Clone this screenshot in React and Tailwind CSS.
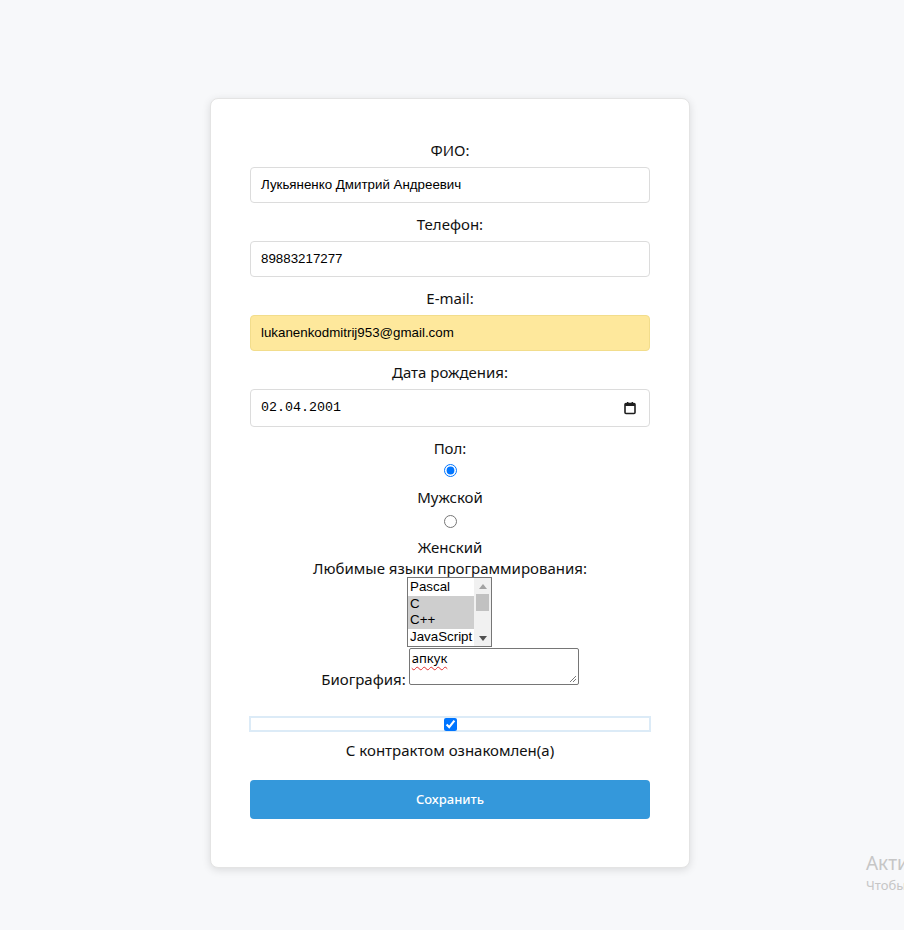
import { useState } from 'react'

const LANGS = [
  { name: 'Pascal', selected: false },
  { name: 'C', selected: true },
  { name: 'C++', selected: true },
  { name: 'JavaScript', selected: false },
]

function FieldLabel({ children, className = '' }) {
  return <div className={`text-center text-[15px] leading-[22px] text-[#111] ${className}`}>{children}</div>
}

function TextBox({ value, yellow }) {
  return (
    <div
      className={`flex h-[36px] items-center rounded-[4px] border px-[10px] font-['Liberation_Sans',Arial,sans-serif] text-[13.33px] text-black ${
        yellow ? 'border-[#f2dd8c] bg-[#fee89c]' : 'border-[#dcdcdc] bg-white'
      }`}
    >
      {value}
    </div>
  )
}

function CalendarIcon() {
  return (
    <svg width="14" height="14" viewBox="0 0 14 14" fill="none">
      <rect x="2" y="2.5" width="10" height="10" rx="1" stroke="#1f1f1f" strokeWidth="1.6" />
      <rect x="2" y="2.5" width="10" height="2.5" fill="#1f1f1f" />
      <rect x="4" y="1" width="1.4" height="2.5" fill="#1f1f1f" />
      <rect x="8.6" y="1" width="1.4" height="2.5" fill="#1f1f1f" />
    </svg>
  )
}

function LangList() {
  return (
    <div className="flex h-[70px] w-[85px] border border-[#767676] bg-white font-['Liberation_Sans',Arial,sans-serif] text-[13.33px] leading-[16.5px] text-black">
      <div className="flex-1 overflow-hidden pt-[1px]">
        {LANGS.map((l) => (
          <div key={l.name} className={`h-[16.5px] pl-[2px] whitespace-nowrap ${l.selected ? 'bg-[#cecece]' : ''}`}>
            {l.name}
          </div>
        ))}
      </div>
      <div className="flex w-[17px] flex-col items-center bg-[#f1f1f1]">
        <div className="flex h-[16px] items-center justify-center">
          <svg width="8" height="5" viewBox="0 0 8 5"><path d="M0 5 L4 0 L8 5 Z" fill="#a3a3a3" /></svg>
        </div>
        <div className="h-[17px] w-[13px] bg-[#c1c1c1]" />
        <div className="flex-1" />
        <div className="flex h-[16px] items-center justify-center">
          <svg width="8" height="5" viewBox="0 0 8 5"><path d="M0 0 L4 5 L8 0 Z" fill="#505050" /></svg>
        </div>
      </div>
    </div>
  )
}

export default function App() {
  const [gender, setGender] = useState('m')
  const [agree, setAgree] = useState(true)

  return (
    <div className="relative min-h-[930px] overflow-hidden bg-[#f7f8fa] pt-[98px] font-['Noto_Sans','Open_Sans',sans-serif]">
      <div className="ml-[210px] w-[480px] rounded-[8px] border border-[#e4e4e4] bg-white px-[39px] pt-[40px] pb-[48px] shadow-[0_2px_8px_rgba(0,0,0,0.12)]">
        <FieldLabel>ФИО:</FieldLabel>
        <div className="mt-[6px]">
          <TextBox value="Лукьяненко Дмитрий Андреевич" />
        </div>

        <FieldLabel className="mt-[10px]">Телефон:</FieldLabel>
        <div className="mt-[6px]">
          <TextBox value="89883217277" />
        </div>

        <FieldLabel className="mt-[10px]">E-mail:</FieldLabel>
        <div className="mt-[6px]">
          <TextBox value="lukanenkodmitrij953@gmail.com" yellow />
        </div>

        <FieldLabel className="mt-[10px]">Дата рождения:</FieldLabel>
        <div className="mt-[6px] flex h-[38px] items-center justify-between rounded-[4px] border border-[#dcdcdc] bg-white pr-[12px] pl-[10px] font-['Liberation_Mono','DejaVu_Sans_Mono',monospace] text-[13.33px] text-black">
          <span>02.04.2001</span>
          <CalendarIcon />
        </div>

        <FieldLabel className="mt-[10px]">Пол:</FieldLabel>
        <div className="mt-[5px] flex h-[13px] justify-center">
          <input
            type="radio"
            name="gender"
            checked={gender === 'm'}
            onChange={() => setGender('m')}
            className="m-0 h-[13px] w-[13px] accent-[#0075ff]"
          />
        </div>
        <FieldLabel className="mt-[9px]">Мужской</FieldLabel>
        <div className="mt-[7px] flex h-[13px] justify-center">
          <input
            type="radio"
            name="gender"
            checked={gender === 'f'}
            onChange={() => setGender('f')}
            className="m-0 h-[13px] w-[13px] accent-[#0075ff]"
          />
        </div>
        <FieldLabel className="mt-[8px]">Женский</FieldLabel>
        <FieldLabel className="-mt-[1px]">Любимые языки программирования:</FieldLabel>
        <div className="-mt-[2px] flex justify-center">
          <div className="ml-[-1px]">
            <LangList />
          </div>
        </div>

        <div className="mt-[1px] flex items-end justify-center">
          <span className="relative top-[5px] mr-[3px] text-[15px] leading-[22px] text-[#111]">Биография:</span>
          <div className="relative h-[37px] w-[170px] rounded-[2px] border border-[#767676] bg-white px-[2px] pt-[1px] font-['Noto_Sans','Open_Sans',sans-serif] text-[13px] leading-[17px] text-black">
            <span className="underline decoration-[#e03030] decoration-wavy decoration-[1px] underline-offset-[3px]">апкук</span>
            <svg className="absolute right-[1px] bottom-[1px]" width="8" height="8" viewBox="0 0 8 8">
              <path d="M7 1 L1 7 M7 4 L4 7" stroke="#7a7a7a" strokeWidth="1" />
            </svg>
          </div>
        </div>

        <div className="mt-[31px] -mx-[1px] flex h-[16px] items-center justify-center border-2 border-[#dcebf7]">
          <input
            type="checkbox"
            checked={agree}
            onChange={(e) => setAgree(e.target.checked)}
            className="m-0 h-[13px] w-[13px] accent-[#0075ff]"
          />
        </div>
        <FieldLabel className="mt-[7px]">С контрактом ознакомлен(а)</FieldLabel>

        <button className="mt-[19px] flex h-[39px] w-full items-center justify-center rounded-[4px] bg-[#3498db] text-[13px] font-medium text-white">
          Сохранить
        </button>
      </div>

      <div className="absolute top-[850px] left-[866px] whitespace-nowrap text-[#c6c6c6]">
        <div className="text-[19px] leading-[26px]">Активация Windows</div>
        <div className="text-[13px] leading-[18px]">Чтобы активировать Windows</div>
      </div>
    </div>
  )
}
